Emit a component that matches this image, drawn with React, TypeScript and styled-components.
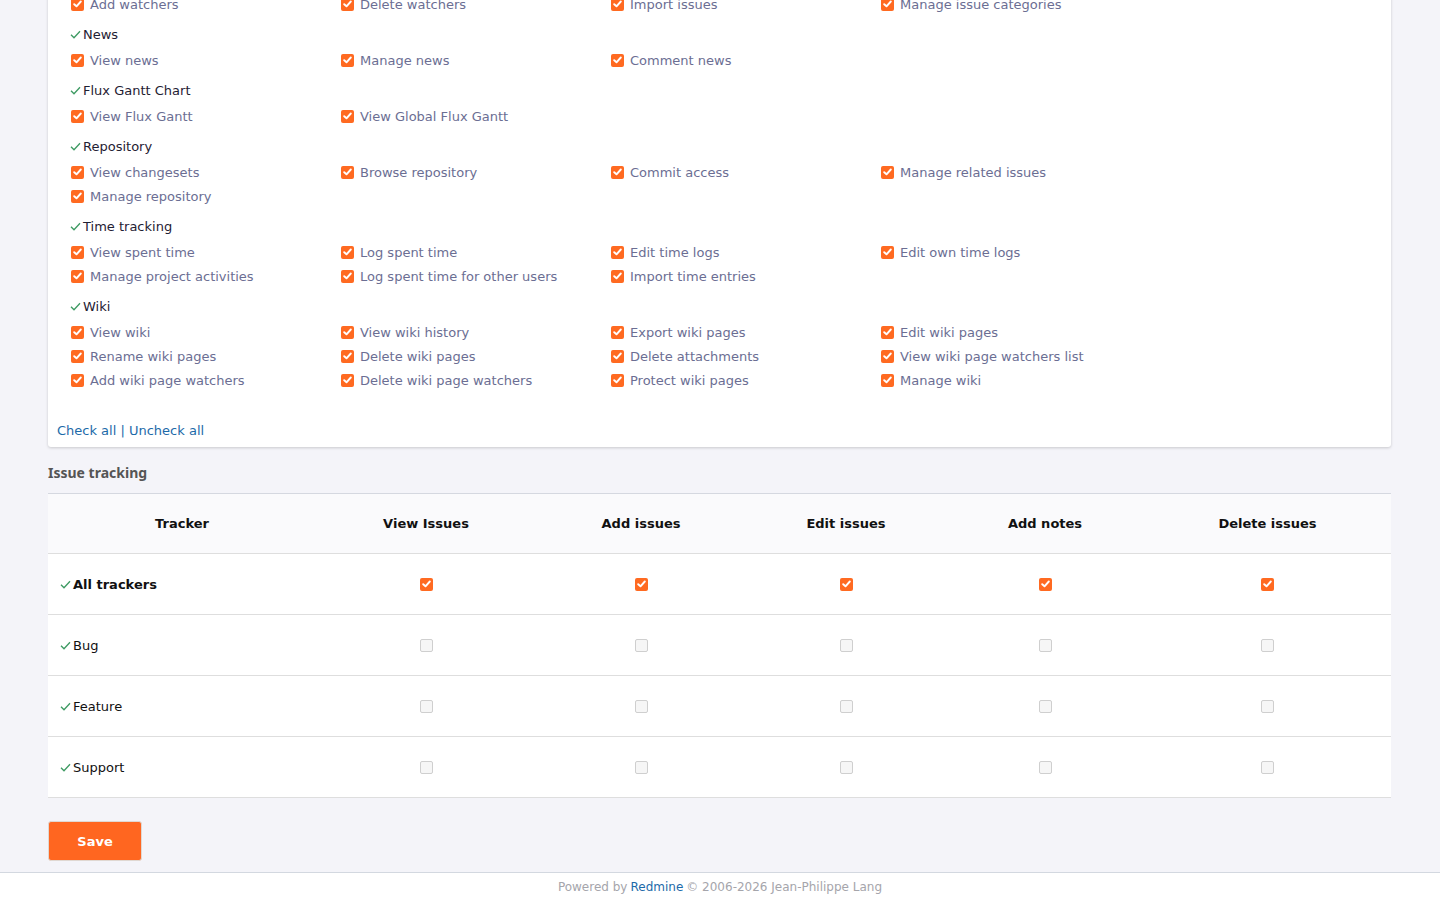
import React from 'react';
import styled, { createGlobalStyle } from 'styled-components';

const GlobalStyle = createGlobalStyle`
	html, body {
		margin: 0;
		padding: 0;
		background: #f4f4f9;
		font-family: 'DejaVu Sans', 'Noto Sans', sans-serif;
	}
`;

const Page = styled.div`
	display: flex;
	flex-direction: column;
	min-height: 900px;
`;

const Content = styled.div`
	padding: 0 49px 0 48px;
	margin-top: -8px;
	flex: 1;
`;

const Card = styled.div`
	background: #fff;
	box-shadow: 0 1px 3px rgba(0, 0, 0, 0.18);
	border-radius: 0 0 3px 3px;
	padding: 0 0 9px 0;
`;

const Groups = styled.div`
	padding: 0 22px;
`;

const Group = styled.div`
	margin-bottom: 5px;
`;

const GroupTitle = styled.div`
	display: flex;
	align-items: center;
	height: 26px;
	margin-bottom: 1px;
	font-size: 13px;
	color: #1f2133;
`;

const Tick = styled.svg`
	width: 11px;
	height: 9px;
	margin-right: 2px;
	flex: none;
`;

const PermGrid = styled.div`
	display: grid;
	grid-template-columns: repeat(4, 270px);
`;

const Perm = styled.label`
	display: flex;
	align-items: center;
	height: 24px;
	font-size: 13px;
	color: #6b6e93;
	white-space: nowrap;
`;

const Box = styled.span<{ $on: boolean }>`
	display: inline-flex;
	align-items: center;
	justify-content: center;
	box-sizing: border-box;
	width: 13px;
	height: 13px;
	border-radius: 2px;
	flex: none;
	background: ${(p) => (p.$on ? '#ff6a21' : '#f6f6f6')};
	border: ${(p) => (p.$on ? 'none' : '1px solid #cfcfcf')};
`;

const PermBox = styled(Box)`
	margin: 0 6px 0 1px;
`;

const Links = styled.div`
	margin-top: 31px;
	padding-left: 9px;
	font-size: 13px;
	color: #1d6aa9;
	a {
		color: #1d6aa9;
		text-decoration: none;
	}
`;

const SectionTitle = styled.h3`
	margin: 16px 0 11px 0;
	font-family: 'Noto Sans', sans-serif;
	font-size: 14px;
	font-weight: 700;
	color: #555;
`;

const Table = styled.table`
	width: 100%;
	border-collapse: collapse;
	background: #fff;
	border-top: 1px solid #d5d8e0;
`;

const Th = styled.th<{ $w: number }>`
	width: ${(p) => p.$w}px;
	height: 59px;
	background: #fafafc;
	font-size: 13px;
	font-weight: 700;
	color: #111;
	text-align: center;
	border-bottom: 1px solid #dedede;
	padding: 0;
`;

const Tr = styled.tr`
	height: 61px;
	border-bottom: 1px solid #dedede;
`;

const NameCell = styled.td<{ $bold: boolean }>`
	padding: 0 0 0 12px;
	font-size: 13px;
	color: #111;
	font-weight: ${(p) => (p.$bold ? 700 : 400)};
	span {
		display: inline-flex;
		align-items: center;
	}
`;

const BoxCell = styled.td`
	text-align: center;
	padding: 0;
	line-height: 0;
`;

const SaveButton = styled.button`
	margin: 23px 0 11px 0;
	width: 94px;
	height: 40px;
	background: #ff6620;
	border: 1px solid #e0d8d2;
	border-radius: 3px;
	color: #fff;
	font-family: 'DejaVu Sans', sans-serif;
	font-size: 13px;
	font-weight: 600;
`;

const Footer = styled.footer`
	background: #fff;
	border-top: 1px solid #d3d8e0;
	height: 27px;
	display: flex;
	justify-content: center;
	align-items: center;
	font-size: 12px;
	color: #a5a5ab;
	a {
		color: #1d6aa9;
		text-decoration: none;
		margin: 0 3px;
	}
`;

const Check = () => (
	<svg width='9' height='8' viewBox='0 0 9 8'>
		<path d='M1.2 4.2 L3.5 6.3 L7.8 1.5' fill='none' stroke='#fff' strokeWidth='1.9' strokeLinecap='round' strokeLinejoin='round' />
	</svg>
);

const CheckBox: React.FC<{ on: boolean }> = ({ on }) => <Box $on={on}>{on && <Check />}</Box>;

const GreenTick = () => (
	<Tick viewBox='0 0 11 9'>
		<path d='M1 4.8 L4 7.8 L10 1.2' fill='none' stroke='#3d9a62' strokeWidth='1.3' />
	</Tick>
);

const groups: { title?: string; perms: string[] }[] = [
	{
		perms: ['Add watchers', 'Delete watchers', 'Import issues', 'Manage issue categories'],
	},
	{ title: 'News', perms: ['View news', 'Manage news', 'Comment news'] },
	{ title: 'Flux Gantt Chart', perms: ['View Flux Gantt', 'View Global Flux Gantt'] },
	{
		title: 'Repository',
		perms: ['View changesets', 'Browse repository', 'Commit access', 'Manage related issues', 'Manage repository'],
	},
	{
		title: 'Time tracking',
		perms: [
			'View spent time',
			'Log spent time',
			'Edit time logs',
			'Edit own time logs',
			'Manage project activities',
			'Log spent time for other users',
			'Import time entries',
		],
	},
	{
		title: 'Wiki',
		perms: [
			'View wiki',
			'View wiki history',
			'Export wiki pages',
			'Edit wiki pages',
			'Rename wiki pages',
			'Delete wiki pages',
			'Delete attachments',
			'View wiki page watchers list',
			'Add wiki page watchers',
			'Delete wiki page watchers',
			'Protect wiki pages',
			'Manage wiki',
		],
	},
];

const columns = [
	{ label: 'Tracker', w: 268 },
	{ label: 'View Issues', w: 220 },
	{ label: 'Add issues', w: 210 },
	{ label: 'Edit issues', w: 200 },
	{ label: 'Add notes', w: 198 },
	{ label: 'Delete issues', w: 247 },
];

const trackers = [
	{ name: 'All trackers', all: true },
	{ name: 'Bug', all: false },
	{ name: 'Feature', all: false },
	{ name: 'Support', all: false },
];

export default function App() {
	return (
		<Page>
			<GlobalStyle />
			<Content>
				<Card>
					<Groups>
						{groups.map((g, i) => (
							<Group key={i}>
								{g.title && (
									<GroupTitle>
										<GreenTick />
										{g.title}
									</GroupTitle>
								)}
								<PermGrid>
									{g.perms.map((p) => (
										<Perm key={p}>
											<PermBox $on={true}>
												<Check />
											</PermBox>
											{p}
										</Perm>
									))}
								</PermGrid>
							</Group>
						))}
					</Groups>
					<Links>
						<a href='#'>Check all</a> | <a href='#'>Uncheck all</a>
					</Links>
				</Card>

				<SectionTitle>Issue tracking</SectionTitle>
				<Table>
					<thead>
						<tr>
							{columns.map((c) => (
								<Th key={c.label} $w={c.w}>
									{c.label}
								</Th>
							))}
						</tr>
					</thead>
					<tbody>
						{trackers.map((t) => (
							<Tr key={t.name}>
								<NameCell $bold={t.all}>
									<span>
										<GreenTick />
										{t.name}
									</span>
								</NameCell>
								{columns.slice(1).map((c) => (
									<BoxCell key={c.label}>
										<CheckBox on={t.all} />
									</BoxCell>
								))}
							</Tr>
						))}
					</tbody>
				</Table>
				<SaveButton>Save</SaveButton>
			</Content>
			<Footer>
				Powered by <a href='#'>Redmine</a> © 2006-2026 Jean-Philippe Lang
			</Footer>
		</Page>
	);
}
